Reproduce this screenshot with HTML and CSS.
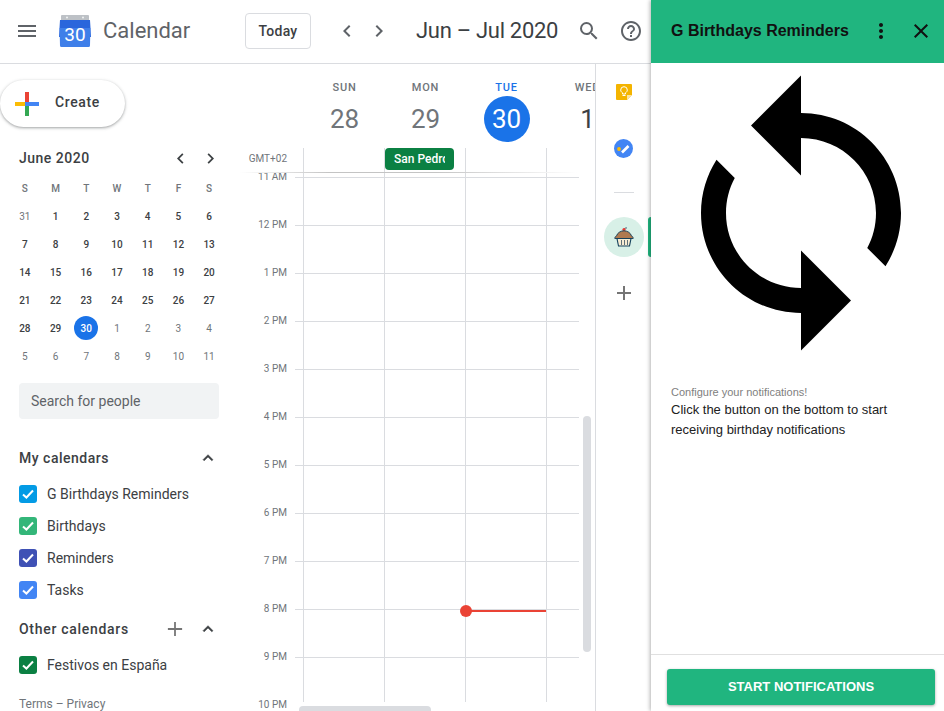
FILE: index.html
```html
<!DOCTYPE html>
<html lang="en">
<head>
  <meta charset="UTF-8">
  <title>Calendar</title>
  <link rel="stylesheet" href="styles.css">
</head>
<body>
  <div class="app">
    <header class="topbar">
      <div class="brand">
        <svg class="menu-icon" viewBox="0 0 24 24"><path d="M3 18h18v-2H3v2zm0-5h18v-2H3v2zm0-7v2h18V6H3z"/></svg>
        <svg class="logo" viewBox="0 0 32 32">
          <path fill="#bdc1c6" d="M3 0h26a1 1 0 0 1 1 1v6H2V1a1 1 0 0 1 1-1z"/>
          <circle cx="8" cy="2.5" r="1" fill="#f1f3f4"/>
          <circle cx="24" cy="2.5" r="1" fill="#f1f3f4"/>
          <path fill="#2a66dc" d="M1 5h30l1 17H0z"/>
          <path fill="#3f7fe9" d="M0.6 13h30.8L31 30.500a1.500 1.500 0 0 1-1.500 1.500h-27A1.500 1.500 0 0 1 1 30.500z"/>
          <text x="16" y="26" text-anchor="middle" class="logo-text">30</text>
        </svg>
        <span class="brand-name">Calendar</span>
      </div>
      <button class="today-btn">Today</button>
      <svg class="nav-icon prev" viewBox="0 0 24 24"><path d="M15.410 7.410 14 6l-6 6 6 6 1.410-1.410L10.830 12z"/></svg>
      <svg class="nav-icon next" viewBox="0 0 24 24"><path d="M8.590 16.590 10 18l6-6-6-6-1.410 1.410L13.170 12z"/></svg>
      <h1 class="range">Jun – Jul 2020</h1>
      <svg class="nav-icon search" viewBox="0 0 24 24"><path d="M15.500 14h-.79l-.28-.27A6.470 6.470 0 0 0 16 9.500 6.500 6.500 0 1 0 9.500 16c1.610 0 3.090-.59 4.230-1.570l.27.28v.79l5 4.990L20.490 19l-4.990-5zm-6 0C7.010 14 5 11.990 5 9.500S7.010 5 9.500 5 14 7.010 14 9.500 11.990 14 9.500 14z"/></svg>
      <svg class="nav-icon help" viewBox="0 0 24 24"><path d="M11 18h2v-2h-2v2zm1-16C6.480 2 2 6.480 2 12s4.480 10 10 10 10-4.480 10-10S17.520 2 12 2zm0 18c-4.410 0-8-3.590-8-8s3.590-8 8-8 8 3.590 8 8-3.590 8-8 8zm0-14c-2.210 0-4 1.790-4 4h2c0-1.100.9-2 2-2s2 .9 2 2c0 2-3 1.750-3 5h2c0-2.250 3-2.500 3-5 0-2.210-1.790-4-4-4z"/></svg>
    </header>

    <div class="workspace">
      <aside class="sidebar">
        <button class="create-btn">
          <svg class="create-plus" viewBox="0 0 24 24">
            <rect x="10" y="0" width="4" height="10" fill="#ea4335"/>
            <rect x="14" y="10" width="10" height="4" fill="#4285f4"/>
            <rect x="10" y="14" width="4" height="10" fill="#34a853"/>
            <rect x="0" y="10" width="10" height="4" fill="#fbbc05"/>
            <rect x="10" y="10" width="4" height="4" fill="#4285f4"/>
          </svg>
          <span class="create-label">Create</span>
        </button>

        <div class="mini-head">
          <span class="mini-title">June 2020</span>
          <svg class="mini-chevron" viewBox="0 0 24 24"><path d="M15.410 7.410 14 6l-6 6 6 6 1.410-1.410L10.830 12z"/></svg>
          <svg class="mini-chevron" viewBox="0 0 24 24"><path d="M8.590 16.590 10 18l6-6-6-6-1.410 1.410L13.170 12z"/></svg>
        </div>

        <div class="mini-grid">
          <span class="dow">S</span><span class="dow">M</span><span class="dow">T</span><span class="dow">W</span><span class="dow">T</span><span class="dow">F</span><span class="dow">S</span>
          <span class="out">31</span><span>1</span><span>2</span><span>3</span><span>4</span><span>5</span><span>6</span>
          <span>7</span><span>8</span><span>9</span><span>10</span><span>11</span><span>12</span><span>13</span>
          <span>14</span><span>15</span><span>16</span><span>17</span><span>18</span><span>19</span><span>20</span>
          <span>21</span><span>22</span><span>23</span><span>24</span><span>25</span><span>26</span><span>27</span>
          <span>28</span><span>29</span><span class="today"><b>30</b></span><span class="out">1</span><span class="out">2</span><span class="out">3</span><span class="out">4</span>
          <span class="out">5</span><span class="out">6</span><span class="out">7</span><span class="out">8</span><span class="out">9</span><span class="out">10</span><span class="out">11</span>
        </div>

        <div class="people-search">Search for people</div>

        <div class="section-head first">
          <span class="section-title">My calendars</span>
          <svg class="section-chevron" viewBox="0 0 24 24"><path d="M12 8l-6 6 1.410 1.410L12 10.830l4.590 4.580L18 14z"/></svg>
        </div>
        <ul class="cal-list">
          <li><span class="check blue-light"><svg viewBox="0 0 18 18"><path d="M4 9.500l3.400 3L14 5.500"/></svg></span>G Birthdays Reminders</li>
          <li><span class="check green-light"><svg viewBox="0 0 18 18"><path d="M4 9.500l3.400 3L14 5.500"/></svg></span>Birthdays</li>
          <li><span class="check indigo"><svg viewBox="0 0 18 18"><path d="M4 9.500l3.400 3L14 5.500"/></svg></span>Reminders</li>
          <li><span class="check blue"><svg viewBox="0 0 18 18"><path d="M4 9.500l3.400 3L14 5.500"/></svg></span>Tasks</li>
        </ul>

        <div class="section-head second">
          <span class="section-title">Other calendars</span>
          <svg class="section-plus" viewBox="0 0 18 18"><path d="M10 1H8v7H1v2h7v7h2v-7h7V8h-7z"/></svg>
          <svg class="section-chevron" viewBox="0 0 24 24"><path d="M12 8l-6 6 1.410 1.410L12 10.830l4.590 4.580L18 14z"/></svg>
        </div>
        <ul class="cal-list">
          <li><span class="check green"><svg viewBox="0 0 18 18"><path d="M4 9.500l3.400 3L14 5.500"/></svg></span>Festivos en España</li>
        </ul>

        <div class="terms">Terms – Privacy</div>
      </aside>

      <main class="schedule">
        <div class="day-heads">
          <div class="day-head"><span class="day-name">SUN</span><span class="day-num">28</span></div>
          <div class="day-head"><span class="day-name">MON</span><span class="day-num">29</span></div>
          <div class="day-head current"><span class="day-name">TUE</span><span class="day-num">30</span></div>
          <div class="day-head upcoming"><span class="day-name">WED</span><span class="day-num">1</span></div>
        </div>

        <div class="allday">
          <span class="gmt">GMT+02</span>
          <div class="allday-col"></div>
          <div class="allday-col"><div class="chip"><span>San Pedro</span></div></div>
          <div class="allday-col"></div>
          <div class="allday-col"></div>
        </div>
        <div class="allday-edge"></div>

        <div class="time-scroll">
          <div class="hour-labels">
            <span>11 AM</span><span>12 PM</span><span>1 PM</span><span>2 PM</span><span>3 PM</span><span>4 PM</span>
            <span>5 PM</span><span>6 PM</span><span>7 PM</span><span>8 PM</span><span>9 PM</span><span>10 PM</span>
          </div>
          <div class="hour-grid">
            <div class="hour-line short"></div>
            <div class="hour-line"></div><div class="hour-line"></div><div class="hour-line"></div>
            <div class="hour-line"></div><div class="hour-line"></div><div class="hour-line"></div>
            <div class="hour-line"></div><div class="hour-line"></div><div class="hour-line"></div>
            <div class="hour-line"></div>
            <div class="day-lines">
              <div class="day-line"></div>
              <div class="day-line"></div>
              <div class="day-line"><div class="now-line"></div></div>
              <div class="day-line"></div>
            </div>
          </div>
        </div>

        <div class="scroll-v"></div>
        <div class="scroll-h"></div>
      </main>

      <nav class="rail">
        <svg class="rail-keep" viewBox="0 0 16 16">
          <path fill="#f4b400" d="M1 0h14a1 1 0 0 1 1 1v10l-5 5H1a1 1 0 0 1-1-1V1a1 1 0 0 1 1-1z"/>
          <path fill="#fbe3a0" d="M16 11l-5 5v-5z"/>
          <path fill="none" stroke="#fff" stroke-width="1" d="M6.500 11.500h3M6.500 10V8.800C5.400 8.200 4.700 7.200 4.700 6a3.300 3.300 0 0 1 6.600 0c0 1.200-.7 2.200-1.800 2.800V10z"/>
        </svg>
        <svg class="rail-tasks" viewBox="0 0 19 19">
          <circle cx="9.500" cy="9.500" r="9.500" fill="#4285f4"/>
          <circle cx="5" cy="10" r="1.900" fill="#fbbc05"/>
          <path d="M8 13.500L14.500 7" stroke="#fff" stroke-width="2.600" fill="none"/>
        </svg>
        <div class="rail-divider"></div>
        <div class="rail-addon">
          <svg class="cupcake" viewBox="0 0 20 20">
            <path d="M10 2.500C10.500 1 12 .8 13 1" fill="none" stroke="#12405c" stroke-width=".8"/>
            <circle cx="10" cy="2.500" r="1.600" fill="#e53935"/>
            <path fill="#b07a50" stroke="#12405c" stroke-width=".9" d="M.8 11.500c0-1.400.8-2.300 1.800-2.700C3.300 6 6.500 3.800 10 3.800s6.700 2.200 7.400 5c1 .4 1.800 1.300 1.800 2.700z"/>
            <path fill="#f7ecd2" stroke="#12405c" stroke-width="1.100" d="M3 11.500h14L15.500 19h-11z"/>
            <path stroke="#5d6f78" stroke-width="1" d="M7.500 13v5M10.500 13v5M13.500 13v5"/>
          </svg>
          <span class="rail-tab"></span>
        </div>
        <svg class="rail-plus" viewBox="0 0 14 14"><path d="M14 8H8v6H6V8H0V6h6V0h2v6h6z"/></svg>
      </nav>
    </div>
  </div>

  <section class="addon">
    <header class="addon-head">
      <span class="addon-title">G Birthdays Reminders</span>
      <svg class="addon-more" viewBox="0 0 24 24"><path d="M12 8c1.100 0 2-.9 2-2s-.9-2-2-2-2 .9-2 2 .9 2 2 2zm0 2c-1.100 0-2 .9-2 2s.9 2 2 2 2-.9 2-2-.9-2-2-2zm0 6c-1.100 0-2 .9-2 2s.9 2 2 2 2-.9 2-2-.9-2-2-2z"/></svg>
      <svg class="addon-close" viewBox="0 0 24 24"><path d="M19 6.410 17.590 5 12 10.590 6.410 5 5 6.410 10.590 12 5 17.590 6.410 19 12 13.410 17.590 19 19 17.590 13.410 12z"/></svg>
    </header>
    <svg class="addon-image" viewBox="0 0 24 24"><path d="M12 4V1L8 5l4 4V6c3.310 0 6 2.690 6 6 0 1.010-.25 1.970-.7 2.800l1.460 1.460C19.540 15.030 20 13.570 20 12c0-4.420-3.580-8-8-8zm0 14c-3.310 0-6-2.690-6-6 0-1.010.25-1.970.7-2.800L5.240 7.740C4.460 8.970 4 10.430 4 12c0 4.420 3.580 8 8 8v3l4-4-4-4v3z"/></svg>
    <div class="addon-body">
      <p class="addon-hint">Configure your notifications!</p>
      <p class="addon-text">Click the button on the bottom to start receiving birthday notifications</p>
    </div>
    <footer class="addon-foot">
      <button class="start-btn">START NOTIFICATIONS</button>
    </footer>
  </section>
</body>
</html>
```

FILE: styles.css
```css
* {
  box-sizing: border-box;
}
html, body {
  height: 100%;
}
body {
  margin: 0;
  display: flex;
  overflow: hidden;
  height: 711px;
  font-family: Roboto, sans-serif;
  color: #3c4043;
  background: white;
}
ul, p, h1 {
  margin: 0;
  padding: 0;
}
button {
  font-family: inherit;
}

/* top bar */
.app {
  width: 651px;
  flex: none;
  display: flex;
  flex-direction: column;
  height: 711px;
}
.topbar {
  height: 64px;
  flex: none;
  display: flex;
  align-items: center;
  border-bottom: 1px solid #dadce0;
  padding-bottom: 2px;
}
.brand {
  width: 245px;
  display: flex;
  align-items: center;
  padding-left: 15px;
}
.menu-icon {
  width: 24px;
  height: 24px;
  fill: #5f6368;
}
.logo {
  width: 32px;
  height: 32px;
  margin-left: 20px;
}
.logo-text {
  font-family: Roboto, sans-serif;
  font-size: 19px;
  fill: white;
}
.brand-name {
  margin-left: 12px;
  font-size: 22px;
  color: #5f6368;
}
.today-btn {
  width: 66px;
  height: 36px;
  border: 1px solid #dadce0;
  border-radius: 4px;
  background: white;
  color: #3c4043;
  font-size: 14px;
  font-weight: 500;
  letter-spacing: .25px;
  padding: 0;
}
.nav-icon {
  width: 24px;
  height: 24px;
  fill: #5f6368;
  flex: none;
}
.prev {
  margin-left: 24px;
}
.next {
  margin-left: 8px;
}
.range {
  margin-left: 25px;
  width: 161px;
  font-size: 22px;
  font-weight: 400;
  letter-spacing: -.3px;
  color: #3c4043;
  white-space: nowrap;
}
.help {
  margin-left: 18px;
}

/* left column */
.workspace {
  flex: 1;
  display: flex;
  min-height: 0;
}
.sidebar {
  width: 240px;
  flex: none;
  overflow: hidden;
}
.create-btn {
  display: flex;
  align-items: center;
  width: 125px;
  height: 47px;
  margin-top: 16px;
  padding: 0 0 0 15px;
  border: none;
  border-radius: 24px;
  background: white;
  box-shadow: 0 1px 2px rgba(60,64,67,.3), 0 1px 3px 1px rgba(60,64,67,.15);
  color: #3c4043;
  font-size: 14px;
  font-weight: 500;
  letter-spacing: .6px;
}
.create-plus {
  width: 24px;
  height: 24px;
  margin-right: 16px;
}
.create-label {
  padding-bottom: 3px;
}
.mini-head {
  display: flex;
  align-items: center;
  height: 20px;
  margin-top: 21px;
  padding: 0 19.5px 0 19px;
  gap: 9px;
}
.mini-title {
  flex: 1;
  font-size: 14px;
  font-weight: 500;
  letter-spacing: .5px;
}
.mini-chevron {
  width: 21px;
  height: 21px;
  fill: #3c4043;
}
.mini-grid {
  display: grid;
  grid-template-columns: repeat(7, 1fr);
  grid-auto-rows: 28px;
  width: 215px;
  margin: 6px 0 0 9.5px;
  font-size: 10px;
  font-weight: 500;
  color: #3c4043;
}
.mini-grid span {
  display: flex;
  align-items: center;
  justify-content: center;
}
.mini-grid .dow {
  color: #70757a;
}
.mini-grid .out {
  color: #70757a;
  font-weight: 400;
}
.today b {
  display: flex;
  align-items: center;
  justify-content: center;
  width: 24px;
  height: 24px;
  border-radius: 50%;
  background: #1a73e8;
  color: white;
  font-weight: 500;
}
.people-search {
  display: flex;
  align-items: center;
  width: 200px;
  height: 36px;
  margin: 13px 0 0 19px;
  padding-left: 12px;
  border-radius: 4px;
  background: #f1f3f4;
  color: #5f6368;
  font-size: 14px;
}
.section-head {
  display: flex;
  align-items: center;
  height: 20px;
  padding: 0 22px 0 19px;
}
.section-head.first {
  margin-top: 29px;
}
.section-head.second {
  margin-top: 13px;
}
.section-title {
  flex: 1;
  font-size: 14px;
  font-weight: 500;
  letter-spacing: .5px;
}
.second .section-title {
  letter-spacing: .7px;
}
.section-chevron {
  width: 20px;
  height: 20px;
  fill: #3c4043;
  stroke: #3c4043;
  stroke-width: .6;
}
.section-plus {
  width: 16px;
  height: 16px;
  margin-right: 15px;
  fill: #757575;
}
.cal-list {
  list-style: none;
  margin-top: 10px;
}
.cal-list li {
  display: flex;
  align-items: center;
  height: 32px;
  padding-left: 19px;
  font-size: 14px;
}
.check {
  width: 18px;
  height: 18px;
  margin-right: 10px;
  border-radius: 3px;
}
.check svg {
  display: block;
  fill: none;
  stroke: white;
  stroke-width: 2;
}
.blue-light { background: #039be5; }
.green-light { background: #33b679; }
.indigo { background: #3f51b5; }
.blue { background: #4285f4; }
.green { background: #0b8043; }
.terms {
  margin: 15px 0 0 19px;
  font-size: 12px;
  line-height: 16px;
  color: #70757a;
}

/* schedule */
.schedule {
  position: relative;
  width: 355px;
  flex: none;
  overflow: hidden;
}
.day-heads {
  display: flex;
  height: 84px;
  padding-left: 64px;
}
.day-head {
  width: 81px;
  flex: none;
  display: flex;
  flex-direction: column;
  align-items: center;
  color: #70757a;
}
.day-name {
  margin-top: 17px;
  font-size: 11px;
  line-height: 14px;
  font-weight: 500;
  letter-spacing: .8px;
}
.day-num {
  display: flex;
  align-items: center;
  justify-content: center;
  width: 46px;
  height: 46px;
  margin-top: 1px;
  border-radius: 50%;
  font-size: 26px;
}
.current .day-name {
  color: #1a73e8;
}
.current .day-num {
  background: #1a73e8;
  color: white;
}
.upcoming .day-num {
  color: #3c4043;
}
.allday {
  display: flex;
  height: 24px;
}
.gmt {
  width: 63px;
  flex: none;
  padding: 5px 16px 0 0;
  text-align: right;
  font-size: 10px;
  color: #70757a;
  white-space: nowrap;
}
.allday-col {
  width: 81px;
  flex: none;
  border-left: 1px solid #dadce0;
}
.chip {
  width: 69px;
  height: 22px;
  padding: 0 9px;
  border-radius: 4px;
  background: #0b8043;
  color: white;
  font-size: 12px;
  font-weight: 500;
  line-height: 22px;
}
.chip span {
  display: block;
  overflow: hidden;
  white-space: nowrap;
}
.allday-edge {
  height: 1px;
  background: linear-gradient(90deg, white 0, #c4c4c4 25%, #c4c4c4 55%, white 95%);
}
.time-scroll {
  display: flex;
  height: 538px;
  overflow: hidden;
}
.hour-labels {
  width: 55px;
  flex: none;
  display: flex;
  flex-direction: column;
  margin-top: -4px;
  padding-right: 8px;
}
.hour-labels span {
  height: 48px;
  flex: none;
  text-align: right;
  font-size: 10px;
  line-height: 16px;
  color: #70757a;
}
.hour-grid {
  position: relative;
  width: 284px;
  height: 529px;
  overflow: hidden;
}
.hour-line {
  height: 48px;
  border-bottom: 1px solid #dadce0;
}
.hour-line.short {
  height: 5px;
}
.day-lines {
  position: absolute;
  top: 0;
  bottom: 0;
  left: 8px;
  display: flex;
}
.day-line {
  position: relative;
  width: 81px;
  flex: none;
  border-left: 1px solid #dadce0;
}
.now-line {
  position: absolute;
  top: 437px;
  left: 0;
  width: 81px;
  height: 2px;
  background: #ea4335;
}
.now-line::before {
  content: "";
  position: absolute;
  top: -5px;
  left: -6px;
  width: 12px;
  height: 12px;
  border-radius: 50%;
  background: #ea4335;
}
.scroll-v {
  position: absolute;
  top: 352px;
  left: 343px;
  width: 8px;
  height: 236px;
  border-radius: 4px;
  background: #dadce0;
}
.scroll-h {
  position: absolute;
  top: 642px;
  left: 59px;
  width: 132px;
  height: 8px;
  border-radius: 4px;
  background: #dadce0;
}

/* add-on rail */
.rail {
  width: 56px;
  flex: none;
  display: flex;
  flex-direction: column;
  align-items: center;
  border-left: 1px solid #dadce0;
}
.rail-keep {
  width: 16px;
  height: 16px;
  margin-top: 20px;
}
.rail-tasks {
  width: 19px;
  height: 19px;
  margin-top: 39px;
}
.rail-divider {
  width: 20px;
  height: 1px;
  margin-top: 34px;
  background: #dadce0;
}
.rail-addon {
  position: relative;
  display: flex;
  align-items: center;
  justify-content: center;
  width: 40px;
  height: 40px;
  margin-top: 24px;
  border-radius: 50%;
  background: #d8f0e7;
}
.cupcake {
  width: 20px;
  height: 20px;
}
.rail-tab {
  position: absolute;
  top: 0;
  right: -7px;
  width: 3px;
  height: 40px;
  border-radius: 3px 0 0 3px;
  background: #20b57f;
}
.rail-plus {
  width: 14px;
  height: 14px;
  margin-top: 29px;
  fill: #757575;
}

/* birthdays panel */
.addon {
  position: relative;
  width: 293px;
  flex: none;
  display: flex;
  flex-direction: column;
  height: 711px;
  overflow: hidden;
  background: white;
  box-shadow: -1px 0 4px rgba(0,0,0,.3);
  font-family: "Liberation Sans", sans-serif;
}
.addon-head {
  height: 63px;
  flex: none;
  display: flex;
  align-items: center;
  padding-left: 20px;
  background: #20b57f;
  padding-bottom: 2px;
}
.addon-title {
  flex: 1;
  font-size: 16px;
  font-weight: 700;
  color: #111;
}
.addon-more, .addon-close {
  width: 24px;
  height: 24px;
  fill: #111;
}
.addon-more {
  margin-right: 16px;
}
.addon-close {
  margin-right: 11px;
}
.addon-image {
  display: block;
  width: 300px;
  height: 300px;
  flex: none;
}
.addon-body {
  padding: 22px 20px 0;
}
.addon-hint {
  font-size: 11px;
  line-height: 14px;
  color: #808080;
}
.addon-text {
  margin-top: 1px;
  font-size: 13px;
  line-height: 20px;
  color: #212121;
}
.addon-foot {
  margin-top: auto;
  height: 57px;
  flex: none;
  border-top: 1px solid #e0e0e0;
  padding: 14px 9px 0 16px;
}
.start-btn {
  display: block;
  width: 268px;
  height: 36px;
  border: none;
  border-radius: 3px;
  background: #20b57f;
  box-shadow: 0 1px 3px rgba(0,0,0,.35);
  color: white;
  font-size: 13px;
  font-weight: 700;
  padding: 0 0 2px;
}
```
